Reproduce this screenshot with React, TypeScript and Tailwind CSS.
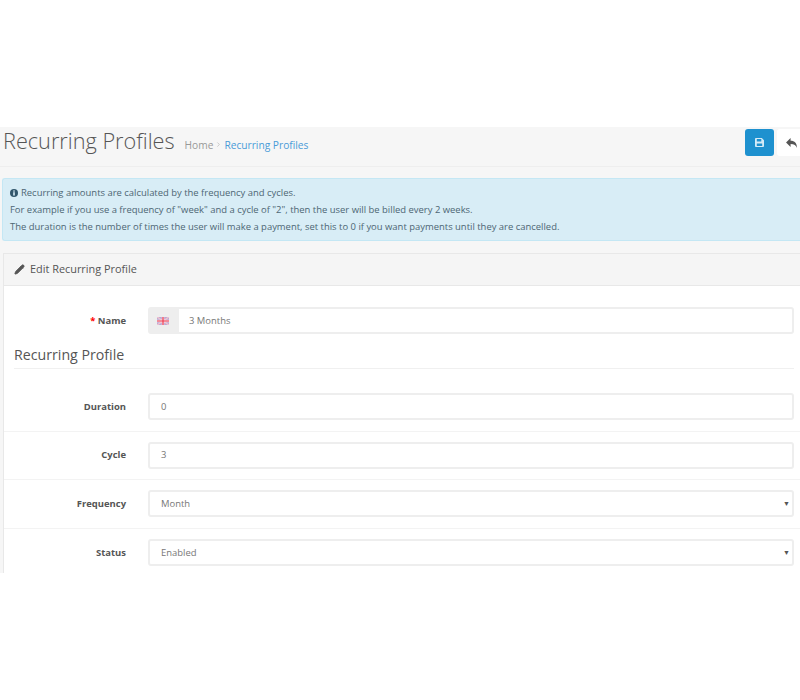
import { ChevronRight, Pencil } from "lucide-react";

const rows = [
  { label: "Duration", value: "0" },
  { label: "Cycle", value: "3" },
  { label: "Frequency", value: "Month", select: true },
  { label: "Status", value: "Enabled", select: true },
];

function SaveIcon() {
  return (
    <svg width="9" height="9" viewBox="0 0 10 10" fill="currentColor">
      <path fillRule="evenodd" d="M1 0h6.600L10 2.400V9a1 1 0 0 1-1 1H1a1 1 0 0 1-1-1V1a1 1 0 0 1 1-1Zm1 1v2.800h5V1Zm0 5v3h6V6Z" />
    </svg>
  );
}

function ReplyIcon() {
  return (
    <svg width="11" height="10" viewBox="0 0 12 11" fill="currentColor">
      <path d="M5 0v3c4.500 0 7 2.500 7 8-1-3-3-4.300-7-4.300V10L0 5Z" />
    </svg>
  );
}

function InfoIcon() {
  return (
    <svg width="8" height="8" viewBox="0 0 10 10" className="shrink-0">
      <circle cx="5" cy="5" r="5" fill="#31566b" />
      <rect x="4" y="1.800" width="2" height="1.500" fill="#d9edf7" />
      <rect x="4" y="4" width="2" height="4.200" fill="#d9edf7" />
    </svg>
  );
}

function FlagIcon() {
  return (
    <svg width="12" height="8" viewBox="0 0 12 8">
      <rect width="12" height="8" fill="#b9a9d6" />
      <path d="M0 0l12 8M12 0L0 8" stroke="#f1c3ce" strokeWidth="1.400" />
      <path d="M6 0v8M0 4h12" stroke="#f6dde3" strokeWidth="2.400" />
      <path d="M6 0v8M0 4h12" stroke="#ee3b50" strokeWidth="1.200" />
    </svg>
  );
}

export default function App() {
  return (
    <div className="h-[700px] bg-white pt-[127px] font-['Open_Sans',sans-serif] text-[9.450px] text-[#666]">
      <div className="h-[446px] overflow-hidden bg-[#f6f6f6]">
        <div className="flex h-10 justify-between border-b border-[#eeeeee] pt-[2px] pl-[3px]">
          <div className="-mt-[1px] flex h-[26px] items-baseline">
            <h1 className="text-[21.700px] leading-[26px] font-light text-[#555]">Recurring Profiles</h1>
            <span className="ml-[10px] text-[10.200px] text-[#999]">Home</span>
            <ChevronRight className="mx-[2px] mt-[7px] h-[7px] w-[7px] self-center text-[#aaa]" />
            <span className="text-[10.200px] text-[#4a9bd8]">Recurring Profiles</span>
          </div>
          <div className="flex gap-[3px]">
            <button className="flex h-[27px] w-[29px] items-center justify-center rounded-[3px] bg-[#1e91cf] text-[#d5ebf7]">
              <SaveIcon />
            </button>
            <button className="flex h-[27px] w-[23px] items-center justify-center rounded-l-[3px] bg-white pl-[6px] text-[#555]">
              <ReplyIcon />
            </button>
          </div>
        </div>

        <div className="mt-[11px] ml-[2px] flex h-[63px] flex-col justify-center rounded-l-[3px] border border-r-0 border-[#c4e7f4] bg-[#d8edf6] pl-[7px] leading-[17px] text-[#4d6674]">
          <p className="flex items-center gap-[3px]">
            <InfoIcon />
            Recurring amounts are calculated by the frequency and cycles.
          </p>
          <p>For example if you use a frequency of "week" and a cycle of "2", then the user will be billed every 2 weeks.</p>
          <p>The duration is the number of times the user will make a payment, set this to 0 if you want payments until they are cancelled.</p>
        </div>

        <div className="mt-3 ml-[3px] border-t border-l border-[#e8e8e8] bg-white">
          <div className="flex h-[32px] items-center gap-[5px] border-b border-[#e8e8e8] bg-[#f5f5f5] pl-[10px] text-[#555]">
            <Pencil className="h-[11px] w-[11px] fill-[#555]" />
            <span className="text-[10.900px]">Edit Recurring Profile</span>
          </div>

          <div className="pt-[21px]">
            <div className="flex items-center">
              <label className="w-[122px] pt-[2px] text-right font-bold text-[#555]">
                <span className="text-[#f00]">*</span> Name
              </label>
              <div className="ml-[22px] flex h-[27px] flex-1 rounded-[3px] border-2 border-[#eee]">
                <span className="flex w-[29px] items-center justify-center bg-[#eee] pr-[4px]">
                  <FlagIcon />
                </span>
                <span className="flex items-center pt-[2px] pl-[10px] text-[#777]">3 Months</span>
              </div>
              <div className="w-[6px]" />
            </div>

            <h2 className="mt-[11px] mr-[6px] ml-[10px] border-b border-[#f0f0f0] pb-[3px] text-[14.200px] leading-[20px] text-[#555]">Recurring Profile</h2>

            <div className="mt-[14px]">
              {rows.map((r, i) => (
                <div key={r.label} className={`flex h-[48.500px] items-center ${i < rows.length - 1 ? "border-b border-[#f3f3f3]" : ""}`}>
                  <label className="w-[122px] text-right font-bold text-[#555]">{r.label}</label>
                  <div className="relative ml-[22px] flex h-[27px] flex-1 items-center rounded-[3px] border-2 border-[#eee] pl-[11px] text-[#777]">
                    {r.value}
                    {r.select && <span className="absolute top-[7px] right-[2px] text-[7px] text-[#555]">▼</span>}
                  </div>
                  <div className="w-[6px]" />
                </div>
              ))}
            </div>
          </div>
        </div>
      </div>
    </div>
  );
}
